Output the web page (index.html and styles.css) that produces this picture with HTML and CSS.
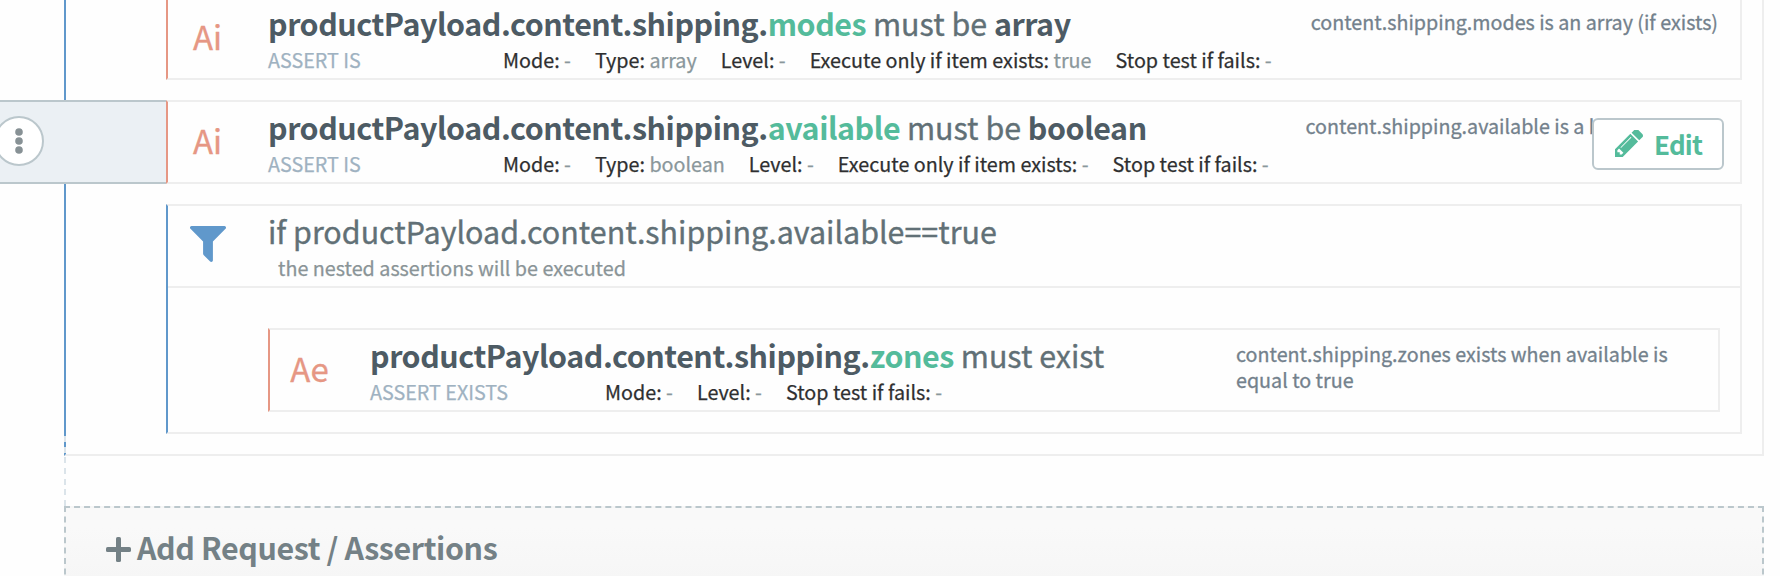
FILE: index.html
```html
<!DOCTYPE html>
<html lang="en">
<head>
<meta charset="utf-8">
<title>Test editor</title>
<link rel="stylesheet" href="styles.css">
</head>
<body>
<main class="page">
  <section class="card">
    <article class="row assert">
      <div class="badge">Ai</div>
      <div class="main">
        <h3 class="title"><b>productPayload.content.shipping.</b><b class="key">modes</b> <span class="op">must be</span> <b>array</b></h3>
        <div class="info"><span class="kind">ASSERT IS</span><span class="meta">Mode: <i>-</i></span><span class="meta">Type: <i>array</i></span><span class="meta">Level: <i>-</i></span><span class="meta">Execute only if item exists: <i>true</i></span><span class="meta">Stop test if fails: <i>-</i></span></div>
      </div>
      <p class="note">content.shipping.modes is an array (if exists)</p>
    </article>
    <article class="row assert">
      <div class="handle"><span class="dots"><svg viewBox="0 0 8 26" width="8" height="26"><circle cx="4" cy="4" r="3.8"/><circle cx="4" cy="13" r="3.8"/><circle cx="4" cy="22" r="3.8"/></svg></span></div>
      <div class="badge">Ai</div>
      <div class="main">
        <h3 class="title"><b>productPayload.content.shipping.</b><b class="key">available</b> <span class="op">must be</span> <b>boolean</b></h3>
        <div class="info"><span class="kind">ASSERT IS</span><span class="meta">Mode: <i>-</i></span><span class="meta">Type: <i>boolean</i></span><span class="meta">Level: <i>-</i></span><span class="meta">Execute only if item exists: <i>-</i></span><span class="meta">Stop test if fails: <i>-</i></span></div>
      </div>
      <p class="note clipped">content.shipping.available is a boolean</p>
      <button class="edit"><svg viewBox="128 212 1515 1452" width="28" height="27"><path d="M491 1536l91-91-235-235-91 91v107h128v128h107zm523-928q0-22-22-22-10 0-17 7l-542 542q-7 7-7 17 0 22 22 22 10 0 17-7l542-542q7-7 7-17zm-54-192l416 416-832 832h-416v-416zm683 96q0 53-37 90l-166 166-416-416 166-165q36-38 90-38 53 0 91 38l235 234q37 39 37 91z"/></svg><span>Edit</span></button>
    </article>
    <section class="group">
      <header class="cond">
        <div class="funnel"><svg viewBox="192 256 1408 1408" width="36" height="36"><path d="M1595 295q17 41-14 70l-493 493v742q0 42-39 59-13 5-25 5-27 0-45-19l-256-256q-19-19-19-45v-486l-493-493q-31-29-14-70 17-39 59-39h1280q42 0 59 39z"/></svg></div>
        <div class="main">
          <h3 class="title"><span class="op">if productPayload.content.shipping.available==true</span></h3>
          <div class="info"><span class="hint">the nested assertions will be executed</span></div>
        </div>
      </header>
      <article class="row assert nested">
        <div class="badge">Ae</div>
        <div class="main">
          <h3 class="title"><b>productPayload.content.shipping.</b><b class="key">zones</b> <span class="op">must exist</span></h3>
          <div class="info"><span class="kind">ASSERT EXISTS</span><span class="meta">Mode: <i>-</i></span><span class="meta">Level: <i>-</i></span><span class="meta">Stop test if fails: <i>-</i></span></div>
        </div>
        <p class="note">content.shipping.zones exists when available is equal to true</p>
      </article>
    </section>
    <div class="connector"></div>
  </section>
  <section class="add"><svg viewBox="0 0 25 25" width="25" height="25"><rect x="10" y="0" width="5" height="25" rx="1.6"/><rect x="0" y="10" width="25" height="5" rx="1.6"/></svg><span>Add Request / Assertions</span></section>
</main>
</body>
</html>
```
FILE: styles.css
```css
* { box-sizing: border-box; }
body { margin: 0; background: #fefefe; font-family: "Noto Sans CJK SC", "Open Sans", sans-serif; }
.page { height: 576px; overflow: hidden; }
.card {
  position: relative;
  display: flex;
  flex-direction: column;
  gap: 20px;
  width: 1700px;
  height: 456px;
  margin-left: 64px;
  padding: 0 20px 20px 100px;
  border: 2px solid #eee;
  border-left-color: #6098cb;
  border-top: 0;
}
.row {
  position: relative;
  display: flex;
  flex: none;
  height: 84px;
  border: 2px solid #eee;
  border-left-color: #e69784;
}
.card > .row:first-child { margin-top: -4px; }
.badge {
  width: 79px;
  margin-right: 21px;
  padding-top: 18px;
  color: #e69784;
  font-size: 33px;
  line-height: 40px;
  text-align: center;
  -webkit-text-stroke: 0.3px;
}
.main { flex: none; padding-top: 7px; }
.title { margin: 0; font-size: 30.42px; line-height: 36px; font-weight: 400; color: #4d5b64; white-space: pre; }
.title b { letter-spacing: -0.44px; }
.title .key { color: #54bb9b; }
.op { color: #617076; -webkit-text-stroke: 0.35px; }
.info {
  display: flex;
  gap: 24px;
  margin-top: 5.6px;
  font-size: 19.74px;
  line-height: 26px;
  color: #2e2f30;
  white-space: pre;
  -webkit-text-stroke: 0.25px;
}
.kind { width: 211px; color: #9fb2c1; }
.meta i { font-style: normal; color: #8a979b; }
.hint { padding-left: 10px; color: #8a9497; }
.note {
  position: absolute;
  top: 10.6px;
  right: 22px;
  margin: 0;
  font-size: 19.7px;
  line-height: 26px;
  color: #73818c;
  white-space: nowrap;
  -webkit-text-stroke: 0.3px;
}
/* The note is cut where the edit button begins */
.note.clipped { left: 1137.5px; width: 288px; overflow: hidden; }
.nested .note { left: 966px; width: 450px; white-space: normal; }
.handle {
  position: absolute;
  top: -2px;
  left: -168px;
  width: 166px;
  height: 84px;
  background: #ebf0f4;
  border: solid #bbc7cc;
  border-width: 2px 0;
}
.dots {
  display: flex;
  align-items: center;
  justify-content: center;
  width: 50px;
  height: 50px;
  margin: 14px 0 0 -6px;
  border: 2px solid #bbc7cc;
  border-radius: 50%;
  background: #fff;
  fill: #879195;
}
.edit {
  position: absolute;
  top: 16px;
  right: 16px;
  display: flex;
  align-items: center;
  gap: 11px;
  width: 132px;
  height: 52px;
  padding: 0 0 1px 21px;
  border: 2px solid #bbc7cc;
  border-radius: 6px;
  background: #fff;
  color: #54bb9b;
  fill: #54bb9b;
  font: 700 26px/32px "Noto Sans CJK SC", "Open Sans", sans-serif;
  letter-spacing: -0.8px;
}
.group { height: 230px; border: 2px solid #eee; border-left-color: #6098cb; }
.cond { display: flex; height: 82px; border-bottom: 2px solid #eee; }
.funnel { width: 100px; padding: 20px 0 0 22px; fill: #6098cb; }
.nested { margin: 40px 20px 0 100px; }
.connector {
  position: absolute;
  left: -2px;
  top: 436px;
  width: 2px;
  height: 70px;
  background: repeating-linear-gradient(#dbe4ea 0 6px, transparent 6px 10.67px);
}
.add {
  display: flex;
  align-items: flex-start;
  gap: 6px;
  width: 1700px;
  height: 110px;
  margin: 50px 0 0 64px;
  padding: 21px 0 0 40px;
  border: 2px dashed #bbc7cc;
  background: linear-gradient(#f9f9f9, #f9f9f9 20px, #f6f6f6 70px);
  color: #748186;
  fill: #748186;
  font-size: 30.4px;
  line-height: 36px;
  font-weight: 700;
  letter-spacing: -0.38px;
}
.add svg { margin-top: 8px; }
```
